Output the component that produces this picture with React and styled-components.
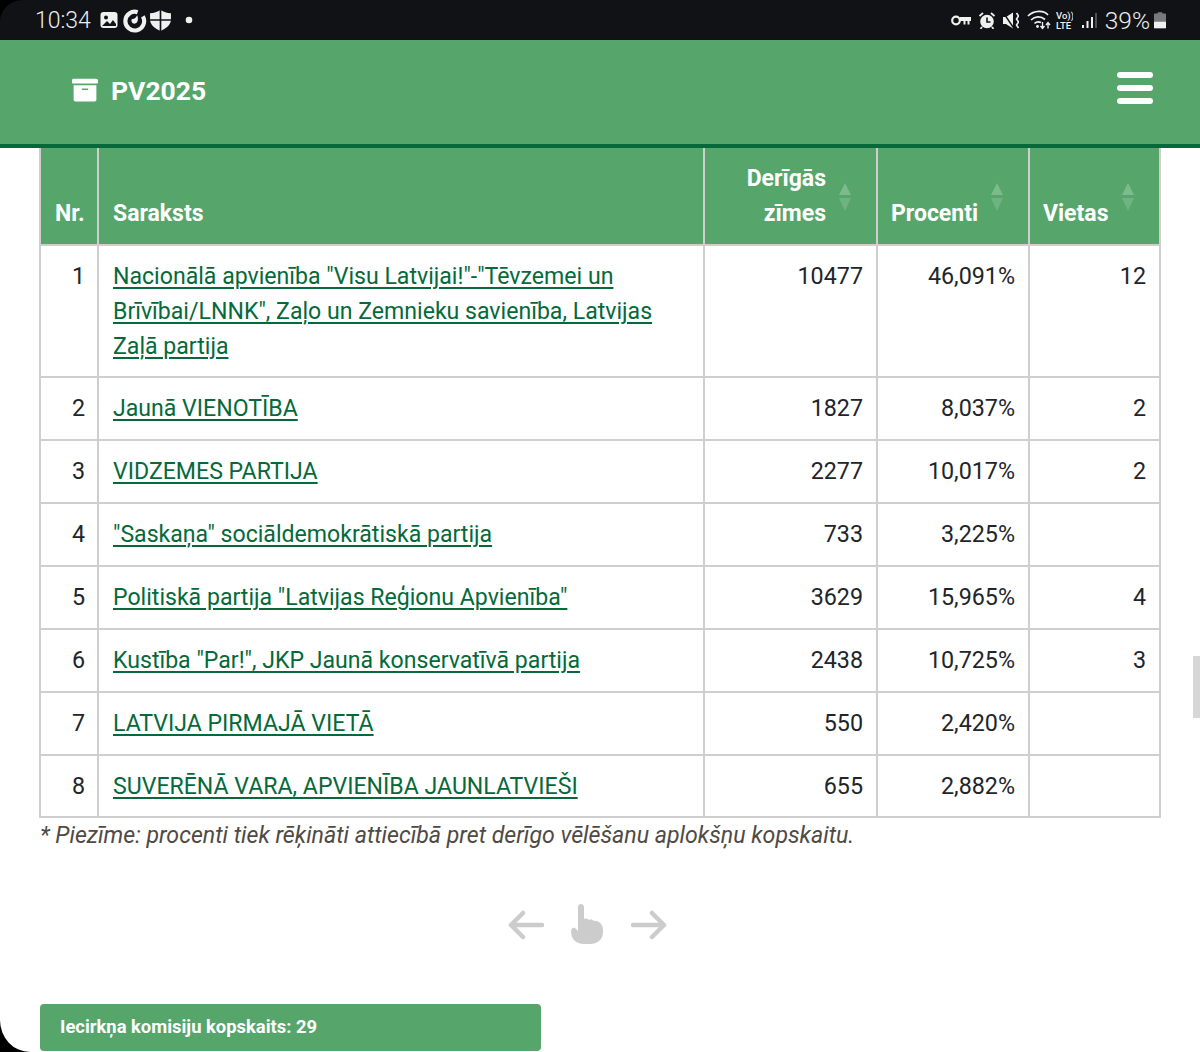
import React from "react";
import styled, { createGlobalStyle } from "styled-components";
import { FaArchive } from "react-icons/fa";

const GlobalStyle = createGlobalStyle`
  html, body {
    margin: 0;
    padding: 0;
    background: #000;
  }
  body {
    font-family: Roboto, "Liberation Sans", sans-serif;
    color: #212529;
    overflow: hidden;
  }
  * {
    box-sizing: border-box;
  }
`;

const Page = styled.div`
  width: 1200px;
  height: 1052px;
  overflow: hidden;
  position: relative;
  display: flex;
  flex-direction: column;
  background: #000;
`;

const StatusBar = styled.div`
  height: 40px;
  flex-shrink: 0;
  background: #101216;
  color: #eceef0;
  display: flex;
  align-items: center;
  justify-content: space-between;
  padding: 0 34px 0 35px;
  border-radius: 22px 0 0 0;
`;

const StatusGroup = styled.div`
  display: flex;
  align-items: center;
  gap: ${(p) => p.$gap}px;
`;

const Clock = styled.span`
  font-size: 23px;
  margin-right: 5px;
  font-weight: 300;
`;

const Battery = styled.span`
  font-size: 24.5px;
  font-weight: 300;
  margin-right: -4px;
`;

const StatusIcon = styled.svg`
  flex-shrink: 0;
  margin-left: ${(p) => p.$left || 0}px;
`;

const Header = styled.header`
  height: 108px;
  flex-shrink: 0;
  background: #56a66c;
  border-bottom: 4px solid #05693a;
  display: flex;
  align-items: center;
  justify-content: space-between;
  padding: 0 47px 8px 72px;
`;

const Brand = styled.div`
  display: flex;
  align-items: center;
  gap: 13px;
  color: #fff;
  font-size: 26.5px;
  font-weight: 700;
  margin-top: 4px;
`;

const Burger = styled.div`
  width: 36px;
  display: flex;
  flex-direction: column;
  gap: 7px;
  span {
    height: 6px;
    border-radius: 3px;
    background: #fff;
  }
`;

const Content = styled.main`
  flex: 1;
  padding: 0 40px;
  background: #fff;
  border-bottom-left-radius: 30px 32px;
`;

const Table = styled.table`
  width: 1120px;
  margin-left: -1px;
  table-layout: fixed;
  border-collapse: collapse;
  font-size: 23.3px;
  border: 2px solid #cfcfcf;
  border-top: 0;
`;

const Column = styled.col`
  width: ${(p) => p.$width}px;
`;

const HeadCell = styled.th`
  position: relative;
  height: 97px;
  background: #56a66c;
  color: #fff;
  font-size: 23px;
  font-weight: 700;
  line-height: 35px;
  vertical-align: bottom;
  text-align: ${(p) => p.$align || "left"};
  padding: 13px ${(p) => p.$right || 13}px 13px ${(p) => p.$left || 13}px;
  border: 2px solid #cfcfcf;
  border-top: 0;
`;

const SortIcon = styled.svg`
  position: absolute;
  top: 35px;
  right: 25px;
`;

const Cell = styled.td`
  height: ${(p) => p.$height}px;
  padding: 13px ${(p) => p.$right || 13}px 11px ${(p) => p.$left || 13}px;
  line-height: 35px;
  vertical-align: top;
  color: #212529;
  text-align: ${(p) => p.$align || "left"};
  border: 2px solid #cfcfcf;
`;

const ListLink = styled.a`
  font-size: 23.1px;
  color: #05693a;
  text-decoration: underline;
  text-underline-offset: 3px;
  text-decoration-thickness: 1.5px;
`;

const Note = styled.p`
  margin: 2px 0 0;
  font-size: 23.15px;
  line-height: 32px;
  font-style: italic;
  color: #4f4a44;
`;

const SwipeHint = styled.div`
  display: flex;
  justify-content: center;
  align-items: center;
  gap: 27px;
  margin-top: 52px;
  padding-right: 26px;
`;

const TotalBar = styled.div`
  width: 501px;
  height: 47px;
  margin-top: 59px;
  background: #56a66c;
  border-radius: 4px;
  color: #fff;
  font-size: 18.4px;
  font-weight: 700;
  display: flex;
  align-items: center;
  padding: 0 0 2px 20px;
`;

const Scrollbar = styled.div`
  position: absolute;
  right: 0;
  top: 656px;
  width: 7px;
  height: 62px;
  background: #d6d6d6;
`;

const rows = [
  { nr: 1, name: 'Nacionālā apvienība "Visu Latvijai!"-"Tēvzemei un Brīvībai/LNNK", Zaļo un Zemnieku savienība, Latvijas Zaļā partija', votes: 10477, pct: "46,091%", seats: 12, height: 132 },
  { nr: 2, name: "Jaunā VIENOTĪBA", votes: 1827, pct: "8,037%", seats: 2, height: 63 },
  { nr: 3, name: "VIDZEMES PARTIJA", votes: 2277, pct: "10,017%", seats: 2, height: 63 },
  { nr: 4, name: '"Saskaņa" sociāldemokrātiskā partija', votes: 733, pct: "3,225%", height: 63 },
  { nr: 5, name: 'Politiskā partija "Latvijas Reģionu Apvienība"', votes: 3629, pct: "15,965%", seats: 4, height: 63 },
  { nr: 6, name: 'Kustība "Par!", JKP Jaunā konservatīvā partija', votes: 2438, pct: "10,725%", seats: 3, height: 63 },
  { nr: 7, name: "LATVIJA PIRMAJĀ VIETĀ", votes: 550, pct: "2,420%", height: 63 },
  { nr: 8, name: "SUVERĒNĀ VARA, APVIENĪBA JAUNLATVIEŠI", votes: 655, pct: "2,882%", height: 62 },
];

const Sort = () => (
  <SortIcon width="12" height="28" viewBox="0 0 12 28">
    <path d="M6 0 L12 12 H0 Z" fill="#7bbb8d" />
    <path d="M6 28 L12 15 H0 Z" fill="#6fb383" />
  </SortIcon>
);

const App = () => {
  return (
    <Page>
      <GlobalStyle />
      <StatusBar>
        <StatusGroup $gap={4}>
          <Clock>10:34</Clock>
          <StatusIcon width="18" height="18" viewBox="0 0 18 18">
            <rect x="0.5" y="1" width="17" height="16" rx="3" fill="#f0f0f0" />
            <circle cx="6" cy="6.5" r="2" fill="#101216" />
            <path d="M2 15 L7 10 L10 13 L13 9 L16 13 V15 Z" fill="#101216" />
          </StatusIcon>
          <StatusIcon width="25" height="25" viewBox="0 0 24 24">
            <path d="M15 4 A 9 9 0 1 0 20 8" fill="none" stroke="#f0f0f0" strokeWidth="4" />
            <path d="M12 15 C9.5 15 8.5 12.5 9.5 10.5 C11.5 11 13.5 9.5 14.5 7 C16 10 15.5 15 12 15 Z" fill="#f0f0f0" />
          </StatusIcon>
          <StatusIcon $left={-2} width="23" height="23" viewBox="0 0 22 22">
            <path d="M11 1 C14 3 17 4 21 4 V10 C21 15 16 19 11 21 C6 19 1 15 1 10 V4 C5 4 8 3 11 1 Z" fill="#f0f0f0" />
            <path d="M11 1 V21 M1 10.5 H21" stroke="#101216" strokeWidth="1.6" />
          </StatusIcon>
          <StatusIcon $left={9} width="8" height="8" viewBox="0 0 8 8">
            <circle cx="4" cy="4" r="3.3" fill="#f0f0f0" />
          </StatusIcon>
        </StatusGroup>
        <StatusGroup $gap={8}>
          <StatusIcon width="20" height="11" viewBox="0 0 20 10">
            <circle cx="5" cy="5" r="3.8" fill="none" stroke="#f0f0f0" strokeWidth="2.2" />
            <path d="M9 1.5 H20 V5.5 H18.5 V9 H16.5 V5.5 H14.5 V9 H12.5 V5.5 H9 Z" fill="#f0f0f0" />
          </StatusIcon>
          <StatusIcon width="16" height="17" viewBox="0 0 16 17">
            <circle cx="8" cy="9.5" r="6.8" fill="#f0f0f0" />
            <path d="M8 5.5 V10 H11.5" stroke="#101216" strokeWidth="1.6" fill="none" />
            <path d="M0.5 4 L4 1 M15.5 4 L12 1 M3 15 L1.5 16.8 M13 15 L14.5 16.8" stroke="#f0f0f0" strokeWidth="1.8" />
          </StatusIcon>
          <StatusIcon width="16" height="17" viewBox="0 0 16 17">
            <path d="M0 5 H3 L10 0.5 V16.5 L3 12 H0 Z" fill="#f0f0f0" />
            <path d="M0.5 1 L11 16.5" stroke="#101216" strokeWidth="1.4" />
            <path d="M13.5 1 L15.5 4 L13.5 7 L15.5 10 L13.5 13 L15.5 16" stroke="#f0f0f0" strokeWidth="1.6" fill="none" />
          </StatusIcon>
          <StatusIcon width="24" height="20" viewBox="0 0 24 20">
            <path d="M1 6 C7 0 17 0 21 5 M4 10 C8 6 14 6 18 9.5 M7.5 13.5 C9.5 11.5 12 11.5 14 12.5" stroke="#f0f0f0" strokeWidth="1.7" fill="none" />
            <circle cx="10.5" cy="16.5" r="1.4" fill="#f0f0f0" />
            <path d="M15.5 12 V18 M13.5 16 L15.5 18.5 L17.5 16 M21 18.5 V13 M19 15 L21 12.5 L23 15" stroke="#f0f0f0" strokeWidth="1.3" fill="none" />
          </StatusIcon>
          <StatusIcon $left={-3} width="17" height="20" viewBox="0 0 17 20">
            <text x="0" y="8.5" fontFamily="Roboto" fontSize="9.5" fontWeight="500" fill="#f0f0f0">Vo))</text>
            <text x="0" y="18.5" fontFamily="Roboto" fontSize="9.5" fontWeight="500" fill="#f0f0f0">LTE</text>
          </StatusIcon>
          <StatusIcon width="16" height="17" viewBox="0 0 16 17">
            <path d="M1 13 H3 V16 H1 Z M5.5 9 H7.5 V16 H5.5 Z M10 5 H12 V16 H10 Z" fill="#f0f0f0" />
            <path d="M14.5 1 H15.5 V16 H14.5 Z" fill="#8b8d90" />
          </StatusIcon>
          <Battery>39%</Battery>
          <StatusIcon width="12" height="18" viewBox="0 0 13 18">
            <path d="M4 0.5 H9 V2 H12 Q13 2 13 3 V17 Q13 18 12 18 H1 Q0 18 0 17 V3 Q0 2 1 2 H4 Z" fill="#77797c" />
            <path d="M0 11 H13 V17 Q13 18 12 18 H1 Q0 18 0 17 Z" fill="#f0f0f0" />
          </StatusIcon>
        </StatusGroup>
      </StatusBar>

      <Header>
        <Brand>
          <FaArchive size={26} />
          PV2025
        </Brand>
        <Burger>
          <span />
          <span />
          <span />
        </Burger>
      </Header>

      <Content>
        <Table>
          <colgroup>
            <Column $width={58} />
            <Column $width={606} />
            <Column $width={173} />
            <Column $width={152} />
            <Column $width={131} />
          </colgroup>
          <thead>
            <tr>
              <HeadCell $left={14}>Nr.</HeadCell>
              <HeadCell $left={14}>Saraksts</HeadCell>
              <HeadCell $align="right" $right={50}>
                Derīgās zīmes
                <Sort />
              </HeadCell>
              <HeadCell>
                Procenti
                <Sort />
              </HeadCell>
              <HeadCell>
                Vietas
                <Sort />
              </HeadCell>
            </tr>
          </thead>
          <tbody>
            {rows.map((row) => (
              <tr key={row.nr}>
                <Cell $height={row.height} $align="right" $right={12}>{row.nr}</Cell>
                <Cell $height={row.height} $left={14}>
                  <ListLink>{row.name}</ListLink>
                </Cell>
                <Cell $height={row.height} $align="right">{row.votes}</Cell>
                <Cell $height={row.height} $align="right">{row.pct}</Cell>
                <Cell $height={row.height} $align="right">{row.seats}</Cell>
              </tr>
            ))}
          </tbody>
        </Table>
        <Note>* Piezīme: procenti tiek rēķināti attiecībā pret derīgo vēlēšanu aplokšņu kopskaitu.</Note>

        <SwipeHint>
          <svg width="36" height="30" viewBox="0 0 36 30">
            <path d="M34 15 H3 M15 3 L3 15 L15 27" stroke="#cccccc" strokeWidth="4.5" strokeLinecap="round" strokeLinejoin="round" fill="none" />
          </svg>
          <svg width="33" height="41" viewBox="0 0 33 41">
            <path d="M7 3 C7 -1 13 -1 13 3 V15 C15 14 17 15 18 16 C20 15 22 16 23 17 C27 16 32 20 32 26 V28 C32 36 26 40 19 40 H13 C5 40 0 35 0 27 C0 25 2 23 4 24 L7 27 Z" fill="#cccccc" />
          </svg>
          <svg width="36" height="30" viewBox="0 0 36 30">
            <path d="M2 15 H33 M21 3 L33 15 L21 27" stroke="#cccccc" strokeWidth="4.5" strokeLinecap="round" strokeLinejoin="round" fill="none" />
          </svg>
        </SwipeHint>

        <TotalBar>Iecirkņa komisiju kopskaits: 29</TotalBar>
      </Content>

      <Scrollbar />
    </Page>
  );
};

export default App;
